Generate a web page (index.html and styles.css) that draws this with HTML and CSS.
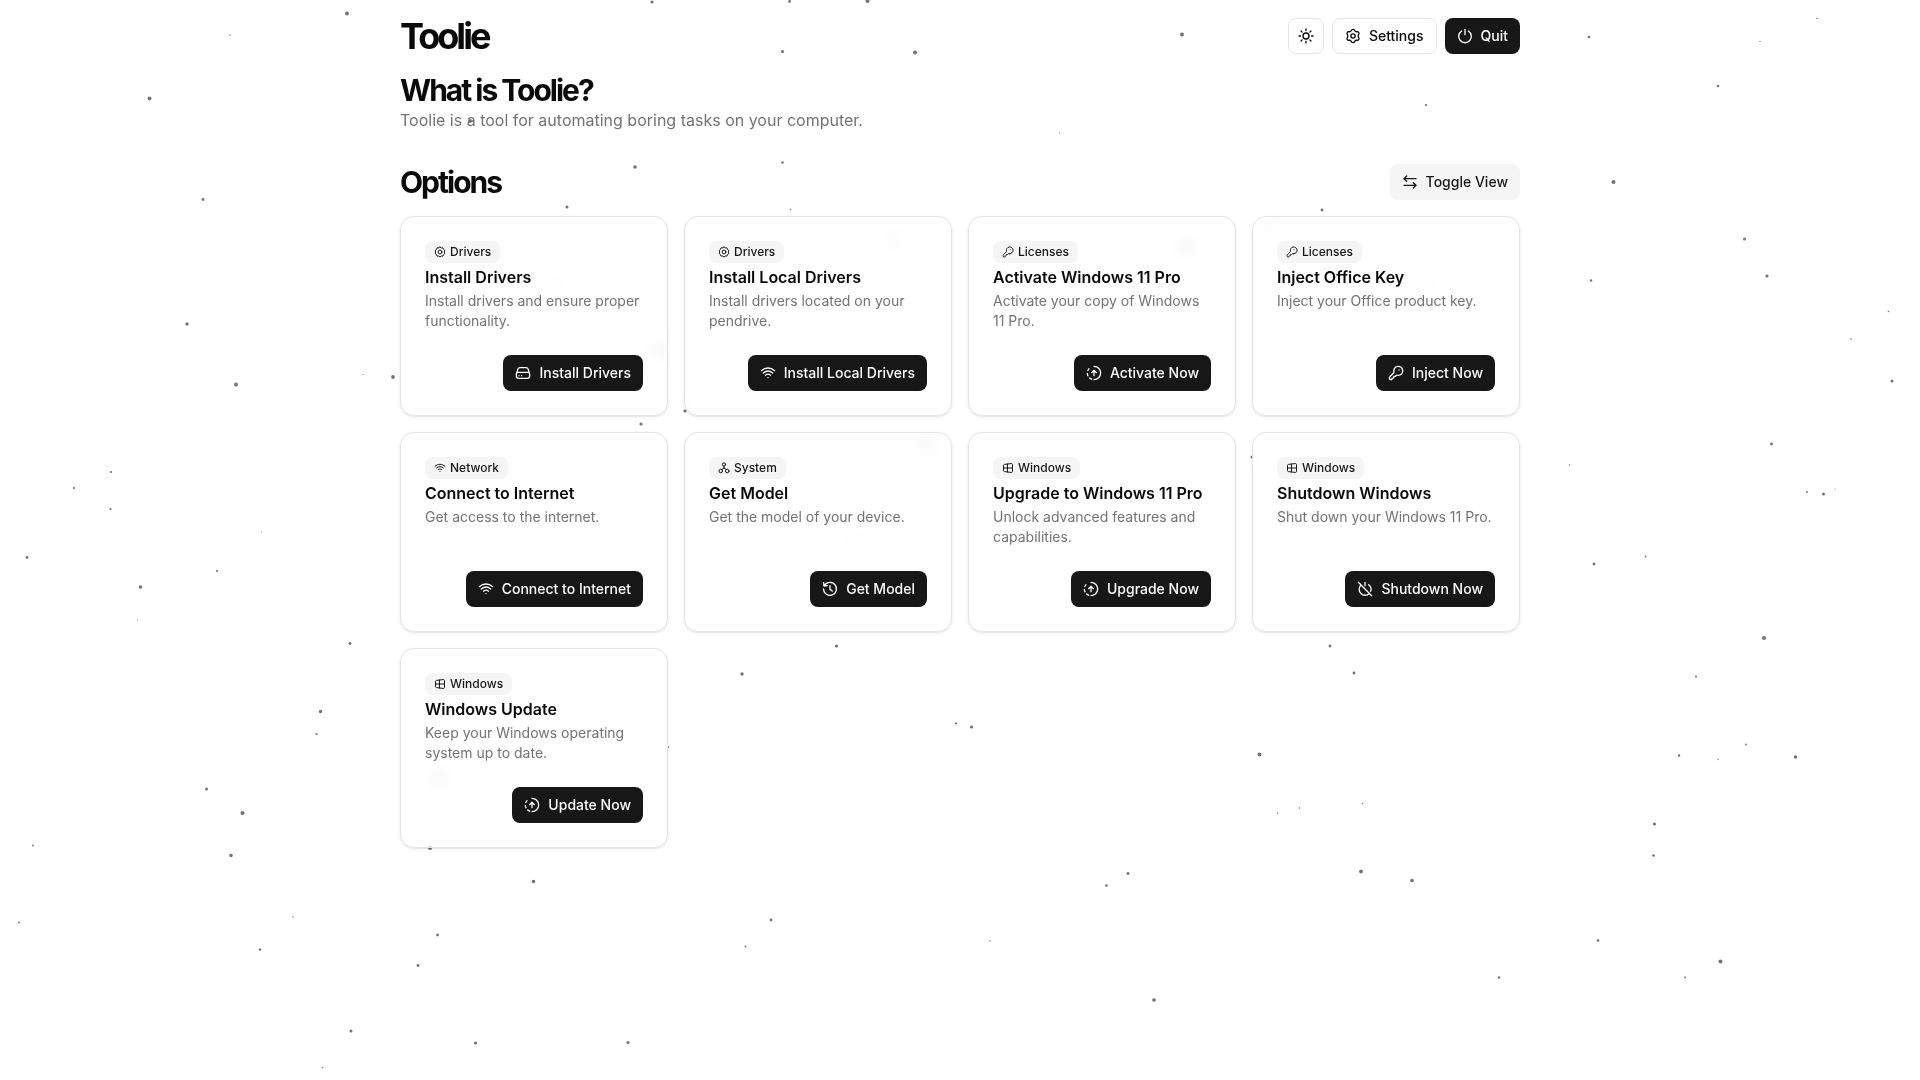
FILE: index.html
```html
<!DOCTYPE html>
<html lang="en">
<head>
<meta charset="utf-8">
<meta name="viewport" content="width=device-width, initial-scale=1">
<title>Toolie</title>
<link rel="stylesheet" href="styles.css">
</head>
<body>
<svg class="sprite" aria-hidden="true">
  <symbol id="sun" viewBox="0 0 24 24"><circle cx="12" cy="12" r="4.500"/><path d="M12 1.500v2.200M12 20.300v2.200M19.400 4.600l-1.600 1.600M6.200 17.800l-1.600 1.600M22.500 12h-2.200M3.700 12H1.500M19.400 19.400l-1.600-1.600M6.200 6.200 4.600 4.600"/></symbol>
  <symbol id="settings" viewBox="0 0 24 24"><circle cx="12" cy="12" r="3.200"/><path d="M9.200 4.200C10 2.600 10.700 2 12 2s2 .6 2.800 2.200c.5 1 1.500 1.500 2.600 1.400 1.800-.2 2.700.1 3.300 1.300.7 1.200.5 2-.5 3.400-.7 1-.7 2.400 0 3.400 1 1.400 1.200 2.200.5 3.400-.6 1.200-1.500 1.500-3.300 1.300-1.100-.1-2.100.4-2.600 1.400C14 21.400 13.300 22 12 22s-2-.6-2.800-2.200c-.5-1-1.500-1.500-2.600-1.400-1.800.2-2.700-.1-3.300-1.300-.7-1.200-.5-2 .5-3.400.7-1 .7-2.400 0-3.400-1-1.400-1.200-2.200-.5-3.400.6-1.200 1.500-1.500 3.300-1.300 1.100.1 2.100-.4 2.600-1.400Z"/></symbol>
  <symbol id="power" viewBox="0 0 24 24"><path d="M7 4.500a9.500 9.500 0 1 0 10 0M12 2v8"/></symbol>
  <symbol id="toggle" viewBox="0 0 24 24"><path d="M3.500 7H21M7 3 3 7l4 4M20.500 17H3M17 13l4 4-4 4"/></symbol>
  <symbol id="cog" viewBox="0 0 24 24"><path d="M12 2l2.700 1.800 3.200-.1 1.100 3 2.500 2-.9 3.300.9 3.200-2.500 2-1.100 3-3.200-.1L12 22l-2.700-1.900-3.200.1-1.100-3-2.500-2 .9-3.200-.9-3.300 2.500-2 1.100-3 3.200.1Z"/><circle cx="12" cy="12" r="3.800"/></symbol>
  <symbol id="key" viewBox="0 0 24 24"><path d="M15.500 15.500a6.750 6.750 0 1 0-6.700-5.200c.2.800 0 1.200-.500 1.700L2.800 17.500c-.4.4-.6.800-.6 1.400v1.600c0 .8.500 1.300 1.300 1.300H5.200c.6 0 1-.400 1-1v-1h1.500c.6 0 1-.4 1-1V17.300H10.200c.5 0 .7-.1 1-.4l1.100-1.100c.5-.5.900-.6 1.500-.5.500.1 1 .2 1.700.2ZM16.500 7.500h.01"/></symbol>
  <symbol id="drive" viewBox="0 0 24 24"><path d="M2 14c0-2 1-3 3-3h14c2 0 3 1 3 3v2.500c0 2.500-1 3.500-3.500 3.500h-13C3 20 2 19 2 16.500ZM2.200 13l2-6.500C4.800 4.700 5.700 4 7.500 4h9c1.800 0 2.700.7 3.300 2.500l2 6.500M6 16h.01M10 16h.01"/></symbol>
  <symbol id="wifi" viewBox="0 0 24 24"><path d="M2 8.500c6-5.300 14-5.300 20 0M5 12c4.200-3.700 9.800-3.700 14 0M8.300 15.300c2.300-1.900 5.100-1.900 7.400 0M12 19h.01"/></symbol>
  <symbol id="upload" viewBox="0 0 24 24"><path d="M12 2a10 10 0 0 1 0 20M8.500 21.300a10 10 0 0 1-3-1.700M2.900 16.200a10 10 0 0 1-.9-3.400M2.800 8.200a10 10 0 0 1 1.700-2.700M12 16V8.500M8.500 11.500 12 8l3.500 3.500"/></symbol>
  <symbol id="nodes" viewBox="0 0 24 24"><circle cx="12" cy="5" r="3.200"/><circle cx="5.500" cy="18" r="3.500"/><circle cx="18.500" cy="18" r="3.500"/><path d="M12 8.200V12m0 0-4.500 3M12 12l4.500 3"/></symbol>
  <symbol id="history" viewBox="0 0 24 24"><path d="M3.500 7a9.700 9.700 0 1 1-1.200 5M2.500 2.500 3 7.500 8 7M12 7v5.500l3.500 2.500"/></symbol>
  <symbol id="windows" viewBox="0 0 24 24"><path d="M3 7c0-1.500.6-2 2-2.200l13-1.600c2-.2 3 .5 3 2.300v13c0 1.800-1 2.500-3 2.300L5 19.200C3.600 19 3 18.500 3 17ZM3 12h18M11 4v16"/></symbol>
  <symbol id="poweroff" viewBox="0 0 24 24"><path d="M2 2l20 20M5.500 6.500a9 9 0 0 0 12.700 12.700M17.500 5.500a9 9 0 0 1 3 10M12 2v5"/></symbol>
</svg>

<svg class="particles" viewBox="0 0 1920 1080" preserveAspectRatio="xMidYMid slice" aria-hidden="true">
  <circle cx="347" cy="13.500" r="2"/><circle cx="230" cy="35" r=".7"/><circle cx="149.500" cy="98.500" r="2"/><circle cx="203" cy="199.500" r="1.400"/><circle cx="187" cy="324" r="1.700"/><circle cx="236" cy="384.500" r="2"/><circle cx="363" cy="374.500" r=".6"/><circle cx="393" cy="377" r="1.900"/><circle cx="111" cy="472" r="1.100"/><circle cx="74" cy="488" r="1.100"/>
  <circle cx="652" cy="2" r="1.600"/><circle cx="789.500" cy="1.500" r="1.400"/><circle cx="867.500" cy="1" r="2"/><circle cx="782.500" cy="51.500" r="1.600"/><circle cx="635" cy="167" r="1.800"/><circle cx="782.500" cy="162.500" r="1.200"/><circle cx="567" cy="207" r="1.500"/><circle cx="790.500" cy="209.500" r=".8"/><circle cx="470" cy="121" r="2"/><circle cx="1426" cy="105" r="1.100"/><circle cx="1322" cy="210" r="1.400"/><circle cx="641" cy="424" r="1.600"/>
  <circle cx="915" cy="52.500" r="2"/><circle cx="1182" cy="34.500" r="2"/><circle cx="1589" cy="37" r="1.300"/><circle cx="1760" cy="41.500" r=".7"/><circle cx="1817" cy="18.500" r=".8"/><circle cx="1718" cy="86" r="1.300"/><circle cx="1059.500" cy="133" r=".6"/><circle cx="1613.500" cy="182" r="2"/><circle cx="1744.500" cy="239" r="1.500"/><circle cx="1591" cy="280.500" r="1.200"/><circle cx="1767" cy="276" r="1.600"/><circle cx="1888.500" cy="311.500" r=".8"/><circle cx="1851" cy="339" r=".8"/><circle cx="1892" cy="381" r="1.500"/><circle cx="1771.500" cy="444" r="1.400"/><circle cx="1569.500" cy="465" r=".7"/><circle cx="1807" cy="492" r=".9"/><circle cx="1823.500" cy="494" r="1.500"/><circle cx="1835" cy="489" r=".6"/><circle cx="1645.500" cy="556.500" r=".9"/><circle cx="1594" cy="564" r="1.400"/><circle cx="1764" cy="638" r="2"/><circle cx="1696" cy="676.500" r="1.100"/><circle cx="1354" cy="673" r="1.400"/><circle cx="1330" cy="646" r="1.400"/><circle cx="836.500" cy="646" r="1.600"/><circle cx="742" cy="674" r="1.700"/>
  <circle cx="350" cy="643.500" r="1.400"/><circle cx="110.500" cy="509" r="1.100"/><circle cx="27" cy="557.500" r="1.400"/><circle cx="140.500" cy="587" r="1.800"/><circle cx="217" cy="571" r="1.100"/><circle cx="261.500" cy="532" r=".6"/><circle cx="137.500" cy="620" r=".6"/><circle cx="320.500" cy="711.500" r="1.700"/><circle cx="316.500" cy="734" r="1.100"/><circle cx="206.500" cy="789" r="1.500"/><circle cx="242.500" cy="813" r="2"/><circle cx="231" cy="855.500" r="1.800"/><circle cx="33" cy="845.500" r=".9"/><circle cx="19" cy="922.500" r=".9"/><circle cx="293" cy="917" r=".7"/><circle cx="260" cy="949.500" r="1.300"/><circle cx="437.500" cy="935" r="1.400"/><circle cx="418" cy="965.500" r="1.400"/><circle cx="533.500" cy="881.500" r="1.800"/><circle cx="351" cy="1031" r="1.500"/><circle cx="475.500" cy="1043" r="1.600"/><circle cx="628" cy="1042.500" r="1.500"/><circle cx="322.500" cy="1067.500" r=".8"/><circle cx="771" cy="920" r="1.400"/><circle cx="745.500" cy="946.500" r=".9"/><circle cx="990" cy="941" r=".7"/><circle cx="956" cy="723.500" r="1.100"/><circle cx="971.500" cy="727" r="1.600"/>
  <circle cx="1106.500" cy="885.500" r="1.300"/><circle cx="1128" cy="873.500" r="1.400"/><circle cx="1154" cy="1000" r="1.800"/><circle cx="1259.500" cy="754.500" r="2"/><circle cx="1277.500" cy="813" r=".8"/><circle cx="1299.500" cy="808" r=".8"/><circle cx="1362.500" cy="803.500" r=".7"/><circle cx="1361" cy="871.500" r="1.900"/><circle cx="1412" cy="880.500" r="1.800"/><circle cx="1499" cy="977.500" r="1.200"/><circle cx="1598" cy="940.500" r="1.300"/><circle cx="1654.500" cy="824" r="1.500"/><circle cx="1653.500" cy="855.500" r="1.300"/><circle cx="1679" cy="755.500" r="1.200"/><circle cx="1718" cy="759.500" r=".7"/><circle cx="1746" cy="744.500" r=".9"/><circle cx="1795.500" cy="757" r="1.700"/><circle cx="1720.500" cy="961.500" r="2"/><circle cx="1685" cy="977.500" r="1"/>
  <circle cx="557" cy="285" r="1"/><circle class="soft" cx="659" cy="350" r="2"/><circle cx="893" cy="239" r="1.600"/><circle cx="685" cy="411" r="1.600"/><circle cx="1186" cy="247" r="2"/><circle class="soft" cx="1268" cy="228" r="1.400"/><circle cx="1425" cy="285" r="1.200"/><circle class="soft" cx="926" cy="443" r="2"/><circle cx="855" cy="542" r="1.200"/><circle cx="1252" cy="457" r="1.500"/><circle cx="439" cy="778" r="2"/><circle cx="668" cy="747" r="1"/><circle cx="430" cy="848" r="2"/>
</svg>

<div class="container">
  <header class="header">
    <h1 class="brand">Toolie</h1>
    <div class="actions">
      <button class="btn btn-outline btn-icon" type="button" aria-label="Toggle theme"><svg class="icon"><use href="#sun"/></svg></button>
      <button class="btn btn-outline" type="button"><svg class="icon"><use href="#settings"/></svg>Settings</button>
      <button class="btn btn-primary" type="button"><svg class="icon"><use href="#power"/></svg>Quit</button>
    </div>
  </header>
  <main class="main">
    <section>
      <h2 class="heading">What is Toolie?</h2>
      <p class="lead">Toolie is a tool for automating boring tasks on your computer.</p>
    </section>
    <section class="options">
      <div class="options-bar">
        <h2 class="heading">Options</h2>
        <button class="btn btn-secondary" type="button"><svg class="icon"><use href="#toggle"/></svg>Toggle View</button>
      </div>
      <div class="grid">
        <article class="card">
          <div class="card-head">
            <span class="badge"><svg class="icon-sm"><use href="#cog"/></svg>Drivers</span>
            <h3 class="card-title">Install Drivers</h3>
            <p class="card-text">Install drivers and ensure proper functionality.</p>
          </div>
          <button class="btn btn-primary" type="button"><svg class="icon"><use href="#drive"/></svg>Install Drivers</button>
        </article>
        <article class="card">
          <div class="card-head">
            <span class="badge"><svg class="icon-sm"><use href="#cog"/></svg>Drivers</span>
            <h3 class="card-title">Install Local Drivers</h3>
            <p class="card-text">Install drivers located on your pendrive.</p>
          </div>
          <button class="btn btn-primary" type="button"><svg class="icon"><use href="#wifi"/></svg>Install Local Drivers</button>
        </article>
        <article class="card">
          <div class="card-head">
            <span class="badge"><svg class="icon-sm"><use href="#key"/></svg>Licenses</span>
            <h3 class="card-title">Activate Windows 11 Pro</h3>
            <p class="card-text">Activate your copy of Windows 11 Pro.</p>
          </div>
          <button class="btn btn-primary" type="button"><svg class="icon"><use href="#upload"/></svg>Activate Now</button>
        </article>
        <article class="card">
          <div class="card-head">
            <span class="badge"><svg class="icon-sm"><use href="#key"/></svg>Licenses</span>
            <h3 class="card-title">Inject Office Key</h3>
            <p class="card-text">Inject your Office product key.</p>
          </div>
          <button class="btn btn-primary" type="button"><svg class="icon"><use href="#key"/></svg>Inject Now</button>
        </article>
        <article class="card">
          <div class="card-head">
            <span class="badge"><svg class="icon-sm"><use href="#wifi"/></svg>Network</span>
            <h3 class="card-title">Connect to Internet</h3>
            <p class="card-text">Get access to the internet.</p>
          </div>
          <button class="btn btn-primary" type="button"><svg class="icon"><use href="#wifi"/></svg>Connect to Internet</button>
        </article>
        <article class="card">
          <div class="card-head">
            <span class="badge"><svg class="icon-sm"><use href="#nodes"/></svg>System</span>
            <h3 class="card-title">Get Model</h3>
            <p class="card-text">Get the model of your device.</p>
          </div>
          <button class="btn btn-primary" type="button"><svg class="icon"><use href="#history"/></svg>Get Model</button>
        </article>
        <article class="card">
          <div class="card-head">
            <span class="badge"><svg class="icon-sm"><use href="#windows"/></svg>Windows</span>
            <h3 class="card-title">Upgrade to Windows 11 Pro</h3>
            <p class="card-text">Unlock advanced features and capabilities.</p>
          </div>
          <button class="btn btn-primary" type="button"><svg class="icon"><use href="#upload"/></svg>Upgrade Now</button>
        </article>
        <article class="card">
          <div class="card-head">
            <span class="badge"><svg class="icon-sm"><use href="#windows"/></svg>Windows</span>
            <h3 class="card-title">Shutdown Windows</h3>
            <p class="card-text">Shut down your Windows 11 Pro.</p>
          </div>
          <button class="btn btn-primary" type="button"><svg class="icon"><use href="#poweroff"/></svg>Shutdown Now</button>
        </article>
        <article class="card">
          <div class="card-head">
            <span class="badge"><svg class="icon-sm"><use href="#windows"/></svg>Windows</span>
            <h3 class="card-title">Windows Update</h3>
            <p class="card-text">Keep your Windows operating system up to date.</p>
          </div>
          <button class="btn btn-primary" type="button"><svg class="icon"><use href="#upload"/></svg>Update Now</button>
        </article>
      </div>
    </section>
  </main>
</div>
</body>
</html>
```
FILE: styles.css
```css
* {
  box-sizing: border-box;
  margin: 0;
}

body {
  background: #fff;
  color: #0a0a0a;
  font-family: Inter, "Liberation Sans", sans-serif;
  font-size: 16px;
  line-height: 24px;
}

.sprite {
  position: absolute;
  width: 0;
  height: 0;
}

/* Floating dots behind the whole page */
.particles {
  position: fixed;
  inset: 0;
  z-index: -1;
  width: 100%;
  height: 100%;
  fill: #737373;
}

.soft {
  filter: blur(4px);
}

.container {
  max-width: 1152px;
  margin: 0 auto;
  padding: 0 16px;
}

.header,
.options-bar {
  display: flex;
  align-items: center;
  justify-content: space-between;
}

.header {
  padding: 16px 0;
}

.brand,
.heading {
  font-weight: 700;
}

.brand {
  font-size: 36px;
  line-height: 40px;
  letter-spacing: -3px;
}

.heading {
  font-size: 30px;
  line-height: 36px;
  letter-spacing: -2px;
}

.actions {
  display: flex;
  gap: 8px;
}

.main {
  display: flex;
  flex-direction: column;
  gap: 32px;
  padding-bottom: 32px;
}

.lead {
  color: #737373;
}

.options {
  display: flex;
  flex-direction: column;
  gap: 16px;
}

.grid {
  display: grid;
  grid-template-columns: repeat(auto-fill, minmax(256px, 1fr));
  gap: 16px;
}

.card {
  display: flex;
  flex-direction: column;
  align-items: flex-end;
  justify-content: space-between;
  gap: 24px;
  padding: 24px;
  border: 1px solid #e5e5e5;
  border-radius: 14px;
  box-shadow: 0 1px 3px rgb(0 0 0 / 10%), 0 1px 2px -1px rgb(0 0 0 / 10%);
  backdrop-filter: blur(8px);
}

.card-head {
  display: flex;
  flex-direction: column;
  align-items: flex-start;
  gap: 6px;
  width: 100%;
}

.badge {
  display: flex;
  align-items: center;
  gap: 4px;
  padding: 2px 8px;
  border: 1px solid transparent;
  border-radius: 8px;
  background: #f5f5f5;
  color: #171717;
  font-size: 12px;
  font-weight: 500;
  line-height: 16px;
}

.card-title {
  font-size: 16px;
  font-weight: 600;
  line-height: 16px;
}

.card-text {
  color: #737373;
  font-size: 14px;
  line-height: 20px;
}

.btn {
  display: inline-flex;
  align-items: center;
  justify-content: center;
  gap: 8px;
  height: 36px;
  padding: 0 12px;
  border: 0;
  border-radius: 8px;
  font-family: inherit;
  font-size: 14px;
  font-weight: 500;
  line-height: 20px;
  white-space: nowrap;
  cursor: pointer;
}

.btn-primary {
  background: #171717;
  color: #fafafa;
}

.btn-outline {
  border: 1px solid #e5e5e5;
  background: #fff;
  color: #0a0a0a;
}

.btn-secondary {
  background: #f5f5f5;
  color: #171717;
}

.btn-icon {
  width: 36px;
  padding: 0;
}

.icon,
.icon-sm {
  flex: none;
  fill: none;
  stroke: currentColor;
  stroke-width: 2;
  stroke-linecap: round;
  stroke-linejoin: round;
}

.icon {
  width: 16px;
  height: 16px;
}

.icon-sm {
  width: 12px;
  height: 12px;
}
```
